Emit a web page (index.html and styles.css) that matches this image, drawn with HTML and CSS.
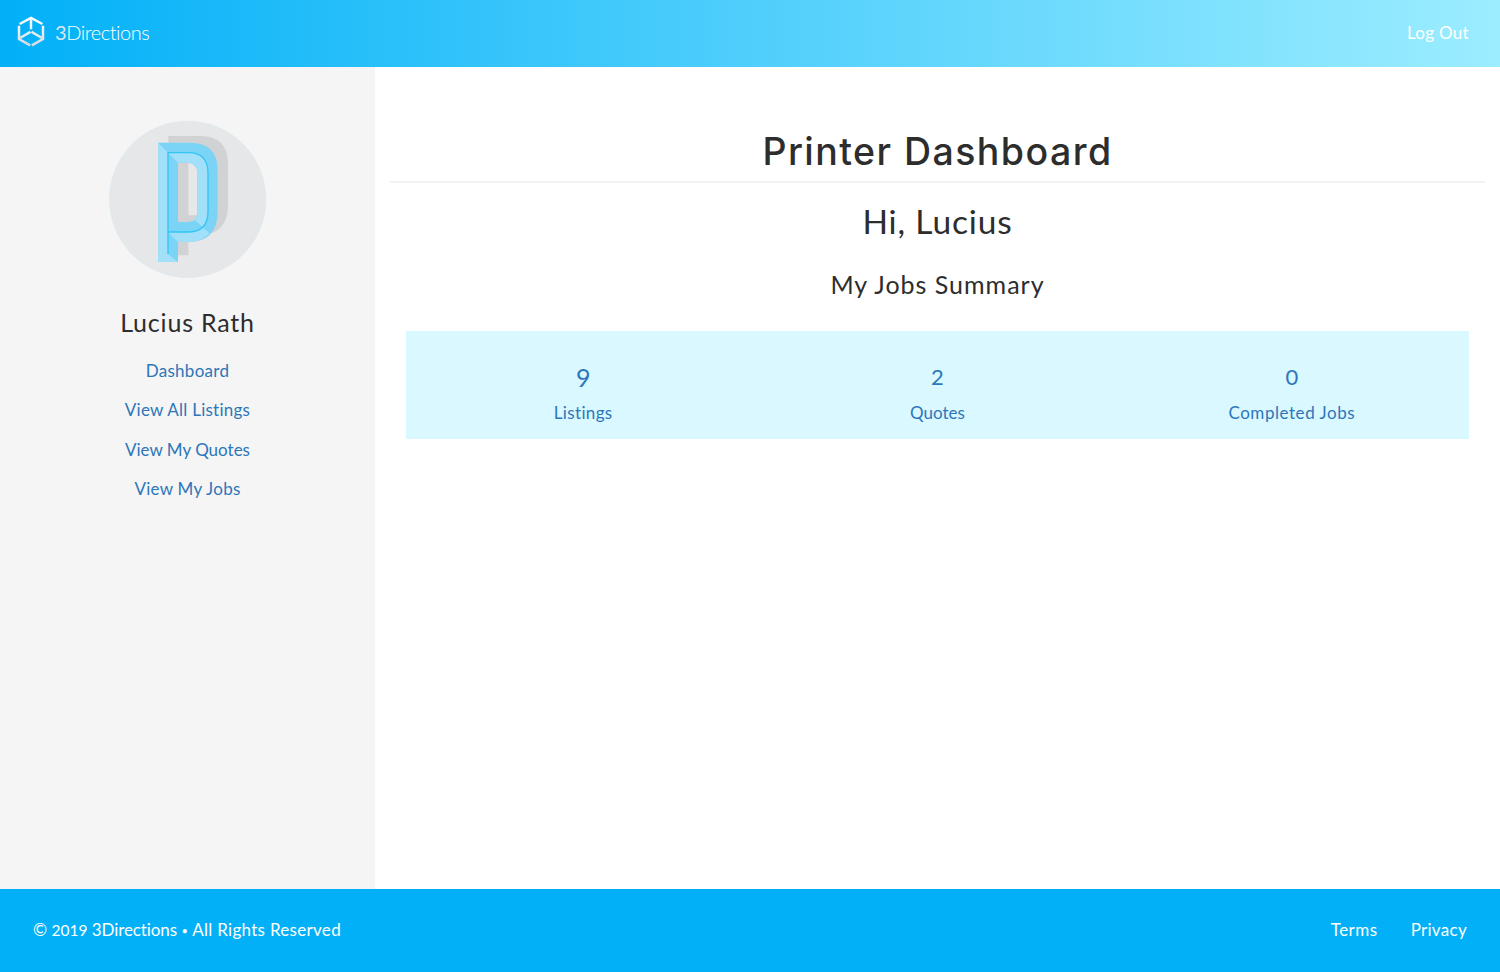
FILE: index.html
```html
<!DOCTYPE html>
<html lang="en">
<head>
<meta charset="utf-8">
<title>3Directions</title>
<link rel="stylesheet" href="styles.css">
</head>
<body>
<header class="navbar">
  <a class="brand">
    <svg class="brand-mark" width="28" height="31" viewBox="0 0 28 31" fill="none" stroke-width="2.5">
      <defs><linearGradient id="metal" gradientUnits="userSpaceOnUse" x1="0" y1="0" x2="0" y2="31"><stop offset="0" stop-color="#fff"/><stop offset="1" stop-color="#d3dbe0"/></linearGradient></defs>
      <g stroke="url(#metal)">
        <path d="M2.600 8 14 2 25.400 8"/>
        <path d="M14 2v11.300"/>
        <path d="M2 9.800v13.200l11.200 6.300"/>
        <path d="M26 9.800v13.200l-11.200 6.300"/>
        <path d="M3 22l10.500-6.100"/>
        <path d="M25 22l-10.500-6.100"/>
      </g>
    </svg>
    <span class="brand-name"><span class="brand-digit">3</span>Directions</span>
  </a>
  <a class="logout">Log Out</a>
</header>
<div class="layout">
  <aside class="sidebar">
    <svg class="avatar" width="159" height="159" viewBox="24 30 477 477">
      <defs><path id="letter" fill-rule="evenodd" d="M174 98H270Q353 98 353 182V305Q353 396 262 396H234V456H174ZM234 158V336H262Q292 336 292 305V190Q292 158 262 158Z"/></defs>
      <circle cx="263" cy="268" r="234.500" fill="#e6e7e9" stroke="#d9e9f0" stroke-width="2"/>
      <use href="#letter" transform="translate(31 -20)" fill="#d1d2d4"/>
      <use href="#letter" fill="#7bd3f6"/>
      <g fill="#a2dff9">
        <path d="M174 98L204 128V432L234 456H174Z"/>
        <path d="M204 128H265Q324 128 324 190V305Q324 333 307 350L283 329Q292 320 292 305V190Q292 158 262 158H234Z"/>
        <path d="M204 366H262Q291 366 307 350L329 371Q303 396 262 396H234Z"/>
      </g>
      <path d="M204 432V128H265Q324 128 324 190V305Q324 366 262 366H204" fill="none" stroke="#32c7f4" stroke-width="4"/>
    </svg>
    <h3 class="user-name">Lucius Rath</h3>
    <nav class="side-nav">
      <a class="link-dashboard">Dashboard</a>
      <a class="link-listings">View All Listings</a>
      <a class="link-quotes">View My Quotes</a>
      <a class="link-jobs">View My Jobs</a>
    </nav>
  </aside>
  <main class="content">
    <h1 class="page-title">Printer Dashboard</h1>
    <h2 class="greeting">Hi, Lucius</h2>
    <h3 class="summary-title">My Jobs Summary</h3>
    <section class="summary">
      <a class="stat"><span class="stat-value stat-low">9</span><span class="stat-label stat-listings">Listings</span></a>
      <a class="stat"><span class="stat-value">2</span><span class="stat-label">Quotes</span></a>
      <a class="stat"><span class="stat-value">0</span><span class="stat-label stat-completed">Completed Jobs</span></a>
    </section>
  </main>
</div>
<footer class="footer">
  <span class="copyright">© <span class="year">2019</span> <span class="company">3Directions</span> <span class="dot">•</span> <span class="rights">All Rights Reserved</span></span>
  <nav class="legal"><a class="terms">Terms</a><a class="privacy">Privacy</a></nav>
</footer>
</body>
</html>
```
FILE: styles.css
```css
* { box-sizing: border-box; }
body {
  margin: 0;
  height: 972px;
  display: flex;
  flex-direction: column;
  font: 17px/24px Lato, "Open Sans", sans-serif;
  font-variant-ligatures: none;
  color: #2d2d2d;
  background: #fff;
}
h1, h2, h3 { margin: 0; font-weight: 400; white-space: nowrap; }
a, span { white-space: nowrap; }
.navbar {
  height: 67px;
  flex: none;
  display: flex;
  justify-content: space-between;
  align-items: center;
  padding: 0 31px 2px 17px;
  background: linear-gradient(90deg, #02b0f8, #9cedff);
  color: #fff;
}
.brand { display: flex; align-items: center; gap: 10px; height: 65px; padding-bottom: 2px; }
.brand-name { font-size: 20px; font-weight: 300; letter-spacing: -0.45px; }
.brand-digit { color: #d9e6ee; font-weight: 400; }
.logout { letter-spacing: 0.3px; }
.layout { flex: 1; display: flex; }
.sidebar {
  width: 375px;
  background: #f5f5f5;
  display: flex;
  flex-direction: column;
  align-items: center;
  padding-top: 53px;
}
.user-name { font-size: 25px; line-height: 30px; margin-top: 28px; letter-spacing: 0.8px; }
.side-nav {
  display: flex;
  flex-direction: column;
  align-items: center;
  gap: 15.5px;
  margin-top: 21.5px;
  color: #2d76b9;
}
.link-dashboard { letter-spacing: 0.3px; }
.link-listings { letter-spacing: 0.25px; }
.link-jobs { letter-spacing: 0.25px; }
.content { flex: 1; padding: 60px 15px 0; text-align: center; }
.page-title {
  font: 500 37.5px/49px Inter, sans-serif;
  letter-spacing: 1.45px;
  height: 56px;
  border-bottom: 2px solid #f3f3f3;
}
.greeting { font-size: 33.5px; line-height: 40px; margin-top: 18px; letter-spacing: 0.85px; }
.summary-title { font-size: 25px; line-height: 30px; margin-top: 28px; letter-spacing: 1px; }
.summary {
  display: grid;
  grid-template-columns: repeat(3, 1fr);
  height: 108px;
  margin: 32px 16px 0;
  background: #d9f8ff;
  color: #2d76b9;
}
.stat { display: flex; flex-direction: column; align-items: center; padding-top: 30px; }
.stat-value { font-size: 22px; line-height: 31px; height: 30px; }
.stat-low { font-size: 25px; line-height: 33px; }
.stat-label { margin-top: 10px; }
.stat-listings { letter-spacing: 0.35px; }
.stat-completed { letter-spacing: 0.55px; }
.footer {
  height: 83px;
  flex: none;
  display: flex;
  justify-content: space-between;
  align-items: center;
  padding: 0 33px 2px;
  background: #02b0f8;
  color: #fff;
}
.copyright { padding-top: 2px; }
.year { font-size: 15.5px; }
.company { letter-spacing: -0.1px; }
.dot { font-size: 11px; vertical-align: 1.5px; }
.rights { letter-spacing: 0.3px; }
.legal { display: flex; gap: 33px; }
.terms { letter-spacing: 0.5px; }
.privacy { letter-spacing: 0.3px; }
```
